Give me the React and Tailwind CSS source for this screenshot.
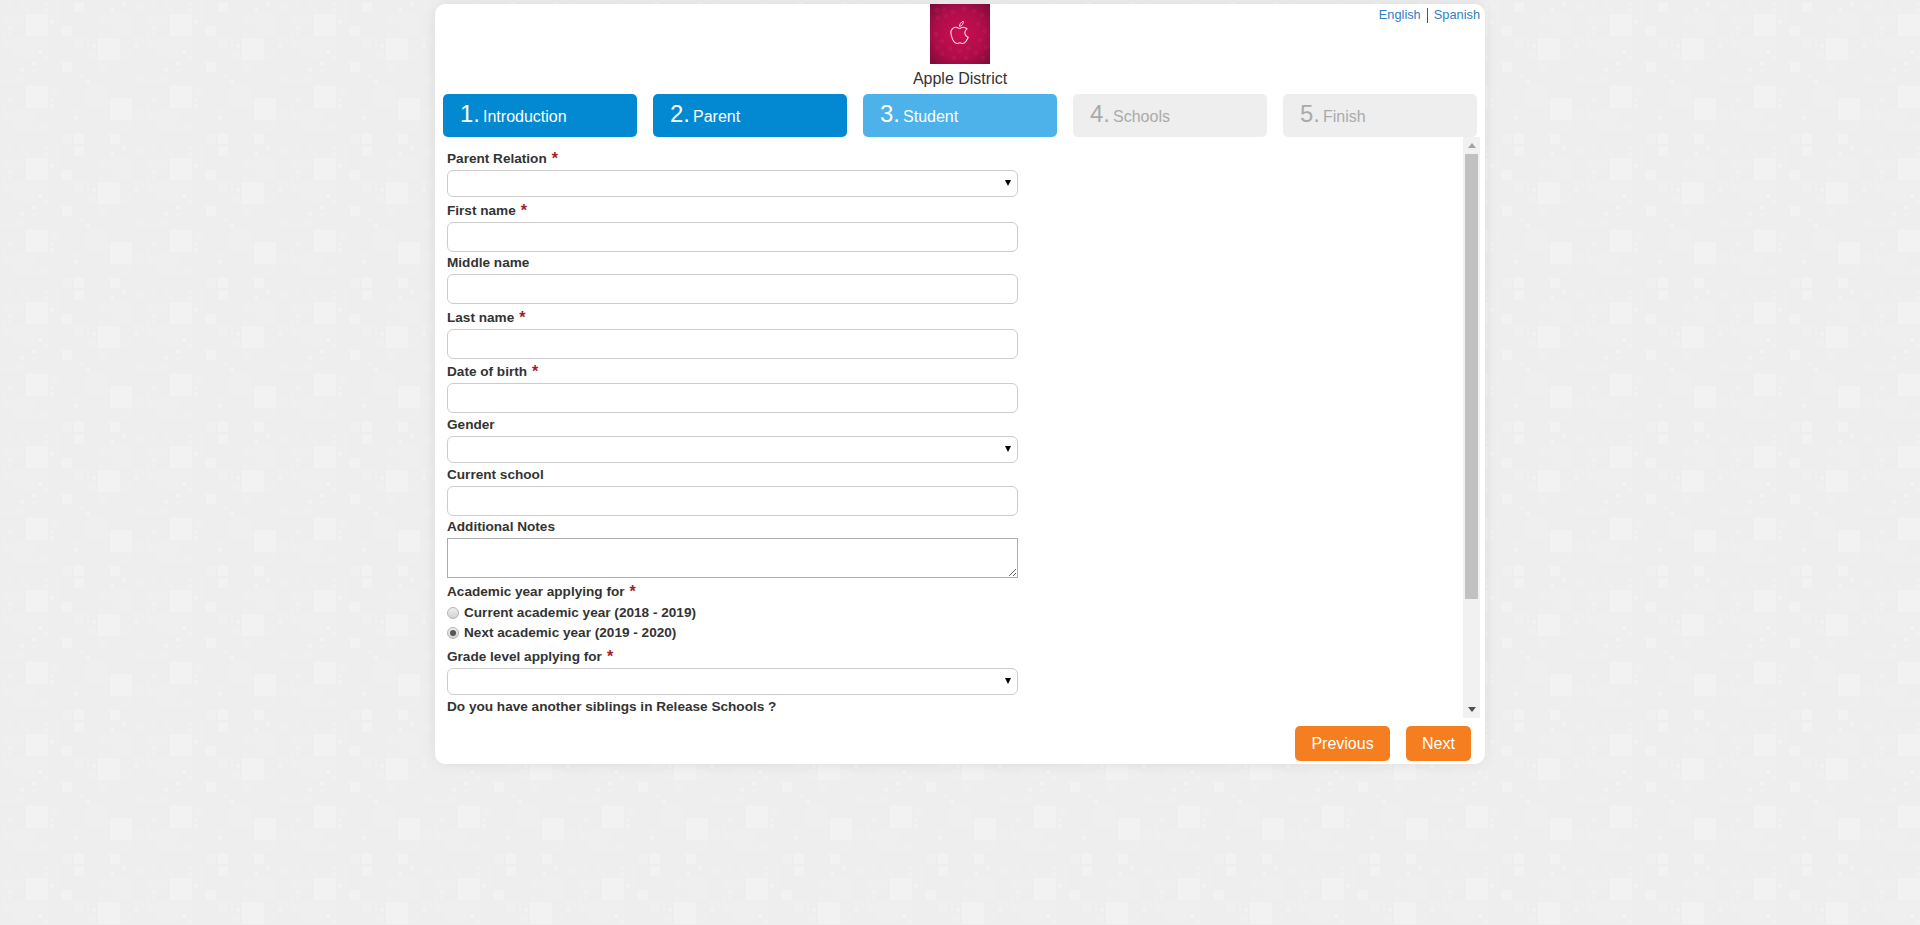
import React from "react";

const steps = [
  { num: "1.", label: "Introduction", cls: "bg-[#0388d2] text-white" },
  { num: "2.", label: "Parent", cls: "bg-[#0388d2] text-white" },
  { num: "3.", label: "Student", cls: "bg-[#4cb2e9] text-white" },
  { num: "4.", label: "Schools", cls: "bg-[#eeeeee] text-[#aaaaaa]" },
  { num: "5.", label: "Finish", cls: "bg-[#eeeeee] text-[#aaaaaa]" },
];

// background tile, read off the reference: [x, y, size, fill]
const B = "#f2f2f2";
const M = "#f0f0f0";
const F = "#efefef";
const S = "#f2f2f2";
const tile = [
  [26, 14, 22, B], [98, 38, 22, B], [26, 86, 22, B], [110, 98, 22, B],
  [110, 14, 22, F], [14, 38, 22, F], [86, 86, 22, F], [14, 110, 22, F],
  [74, 2, 10, B], [62, 26, 10, B], [74, 38, 10, M], [62, 62, 10, B], [74, 134, 10, B], [62, 134, 10, M],
  [110, 134, 10, B], [122, 50, 10, F], [38, 38, 10, F], [2, 2, 10, F], [20, 2, 10, F], [50, 2, 10, F],
  [134, 2, 10, F], [2, 14, 10, F], [14, 14, 10, F], [98, 14, 10, F], [98, 26, 10, F], [2, 38, 10, F],
  [2, 74, 10, F], [14, 74, 10, F], [2, 110, 10, F], [50, 86, 10, F], [98, 62, 10, F], [134, 74, 10, F],
  [122, 122, 10, F], [38, 122, 10, F], [86, 50, 10, F], [134, 110, 10, F],
  [44, 2, 4, M], [44, 8, 4, S], [110, 2, 4, F], [116, 2, 4, F], [122, 2, 4, S], [128, 2, 4, F],
  [110, 8, 4, S], [128, 8, 4, F], [50, 14, 4, F], [56, 14, 4, F], [50, 20, 4, S], [56, 20, 4, M],
  [134, 38, 4, M], [140, 38, 4, F], [134, 44, 4, S],
  [2, 26, 4, F], [8, 26, 4, S], [2, 32, 4, F], [8, 32, 4, M], [38, 50, 4, S], [44, 50, 4, F], [44, 56, 4, S],
  [86, 38, 4, F], [92, 38, 4, F], [86, 44, 4, M], [92, 44, 4, S], [14, 62, 4, F], [20, 62, 4, F],
  [32, 62, 4, S], [20, 68, 4, S], [32, 68, 4, M], [74, 74, 4, F], [80, 74, 4, M], [74, 80, 4, F], [86, 80, 4, S],
  [50, 98, 4, M], [56, 98, 4, F], [50, 104, 4, S], [74, 110, 4, M], [80, 110, 4, F], [74, 116, 4, S],
  [122, 74, 4, F], [2, 98, 4, F], [8, 98, 4, S], [2, 104, 4, M],
];

// little apples scattered over the logo
const doodles = [
  [7, 6], [14, 5], [23, 8], [34, 5], [44, 7], [52, 11], [8, 14], [16, 12], [48, 20], [55, 27], [6, 30], [12, 37],
  [50, 36], [56, 43], [20, 45], [30, 47], [38, 44], [46, 49], [12, 50], [24, 54], [36, 54], [7, 44], [53, 54],
];

function Logo() {
  return (
    <svg width="60" height="60" viewBox="0 0 60 60" className="block">
      <defs>
        <radialGradient id="logoBg" cx="50%" cy="50%" r="70%">
          <stop offset="0%" stopColor="#cc0e52" />
          <stop offset="60%" stopColor="#ae0d49" />
          <stop offset="100%" stopColor="#7a0b38" />
        </radialGradient>
      </defs>
      <rect width="60" height="60" fill="url(#logoBg)" />
      {doodles.map(([x, y], i) => (
        <circle key={i} cx={x} cy={y} r="1.500" fill="none" stroke="#f3a6c0" strokeWidth="0.5" opacity="0.2" />
      ))}
      <path
        d="M29 24.5c-2-1.2-4-1.6-5.6-.6-2.4 1.400-3 4.600-2 8 .9 3.200 3 7.300 5.400 7.600 1.100.1 1.600-.8 3-.8s1.800.9 3 .8c2.100-.2 4.200-3.200 5.400-6.200-2.300-1-3.500-3-3.300-5 .1-1.400.9-2.600 2.100-3.400-1.500-1.700-3.600-2-5.300-1.300-1 .4-1.800.9-2.700.9z"
        fill="none"
        stroke="#fbdbe6"
        strokeWidth="1.100"
      />
      <path d="M29.500 22.500c0-2.500 1.500-4.500 3.800-5.300.2 2.600-1.400 4.700-3.800 5.300z" fill="none" stroke="#fbdbe6" strokeWidth="1" />
    </svg>
  );
}

function Star() {
  return <span className="relative top-px ml-[5px] text-[16px] leading-none text-[#a81c22]">*</span>;
}

function FieldLabel({ children, required, className = "" }) {
  return (
    <label className={`block h-[22px] whitespace-nowrap text-[13.600px] font-bold leading-[22px] text-[#333333] ${className}`}>
      {children}
      {required && <Star />}
    </label>
  );
}

function TextField({ label, required, className }) {
  return (
    <div>
      <FieldLabel required={required} className={className}>{label}</FieldLabel>
      <input type="text" className="block h-[30px] w-[571px] rounded-[6px] border border-[#cccccc] bg-white px-2 outline-none" />
    </div>
  );
}

function SelectField({ label, required, className }) {
  return (
    <div>
      <FieldLabel required={required} className={className}>{label}</FieldLabel>
      <div className="relative h-[27px] w-[571px]">
        <select className="block h-full w-full appearance-none rounded-[6px] border border-[#cccccc] bg-white outline-none" />
        <svg width="6" height="6" viewBox="0 0 6 6" className="pointer-events-none absolute right-[7px] top-[10px]">
          <path d="M0 0h6L3 6z" fill="#000000" />
        </svg>
      </div>
    </div>
  );
}

function Radio({ label, checked }) {
  return (
    <div className="flex h-5 items-center whitespace-nowrap text-[13.600px] font-bold text-[#333333]">
      <span className="flex h-3 w-3 items-center justify-center rounded-full border border-[#b5b5b5] bg-gradient-to-b from-[#f0f0f0] to-[#d2d2d2]">
        {checked && <span className="h-[6px] w-[6px] rounded-full bg-[#555555]" />}
      </span>
      <span className="ml-[5px]">{label}</span>
    </div>
  );
}

function ScrollBar() {
  return (
    <div className="flex h-full w-[17px] flex-col items-center bg-[#f1f1f1]">
      <div className="flex h-[17px] items-center justify-center">
        <svg width="8" height="5" viewBox="0 0 8 5"><path d="M4 0l4 5H0z" fill="#a3a3a3" /></svg>
      </div>
      <div className="h-[445px] w-[13px] bg-[#c1c1c1]" />
      <div className="flex-1" />
      <div className="flex h-[17px] items-center justify-center">
        <svg width="8" height="5" viewBox="0 0 8 5"><path d="M0 0h8L4 5z" fill="#505050" /></svg>
      </div>
    </div>
  );
}

export default function App() {
  return (
    <div className="relative min-h-screen overflow-hidden bg-[#eeeeee] font-['Liberation_Sans',Arial,sans-serif]">
      <svg className="absolute inset-0 h-full w-full" aria-hidden="true">
        <defs>
          <pattern id="tile" width="144" height="144" patternUnits="userSpaceOnUse">
            {tile.map(([x, y, s, fill], i) => (
              <rect key={i} x={x} y={y} width={s} height={s} fill={fill} />
            ))}
          </pattern>
        </defs>
        <rect width="100%" height="100%" fill="url(#tile)" />
      </svg>

      <div className="relative mx-auto w-[1050px] pt-1">
        <div className="relative h-[760px] rounded-[10px] bg-white shadow-[0_0_14px_rgba(0,0,0,0.08)]">
          {/* language links */}
          <div className="absolute right-[5px] top-[1px] flex items-center text-[12.800px] leading-[20px] text-[#2f80c4]">
            <a href="#en">English</a>
            <span className="mx-[6px] h-[15px] w-px bg-[#555555]" />
            <a href="#es">Spanish</a>
          </div>

          {/* header */}
          <div className="flex h-[90px] flex-col items-center">
            <Logo />
            <div className="mt-1 text-[16px] leading-[22px] text-[#333333]">Apple District</div>
          </div>

          {/* steps */}
          <div className="flex gap-4 px-2">
            {steps.map((step) => (
              <div key={step.num} className={`flex h-[43px] flex-1 items-baseline rounded-[5px] pl-[17px] pt-[5px] ${step.cls}`}>
                <span className="text-[24px] leading-[30px]">{step.num}</span>
                <span className="ml-[3px] text-[16px]">{step.label}</span>
              </div>
            ))}
          </div>

          {/* form */}
          <div className="flex h-[581px] pl-3 pr-[5px]">
            <form className="flex-1 overflow-hidden pt-[11px]">
              <SelectField label="Parent Relation" required />
              <TextField label="First name" required className="mt-[3px]" />
              <TextField label="Middle name" />
              <TextField label="Last name" required className="mt-[3px]" />
              <TextField label="Date of birth" required className="mt-[2px]" />
              <SelectField label="Gender" className="mt-px" />
              <TextField label="Current school" className="mt-px" />
              <FieldLabel>Additional Notes</FieldLabel>
              <textarea className="block h-[40px] w-[571px] resize border border-[#adadad] bg-white outline-none" />
              <FieldLabel required className="mt-[3px]">Academic year applying for</FieldLabel>
              <Radio label="Current academic year (2018 - 2019)" />
              <Radio label="Next academic year (2019 - 2020)" checked />
              <SelectField label="Grade level applying for" required className="mt-[3px]" />
              <FieldLabel className="mt-px">Do you have another siblings in Release Schools ?</FieldLabel>
            </form>
            <ScrollBar />
          </div>

          {/* footer buttons */}
          <div className="flex justify-end gap-4 pr-[14px] pt-2">
            <button className="h-[35px] w-[95px] rounded-[5px] bg-[#f57e20] text-[16px] text-white">Previous</button>
            <button className="h-[35px] w-[65px] rounded-[5px] bg-[#f57e20] text-[16px] text-white">Next</button>
          </div>
        </div>
      </div>
    </div>
  );
}
